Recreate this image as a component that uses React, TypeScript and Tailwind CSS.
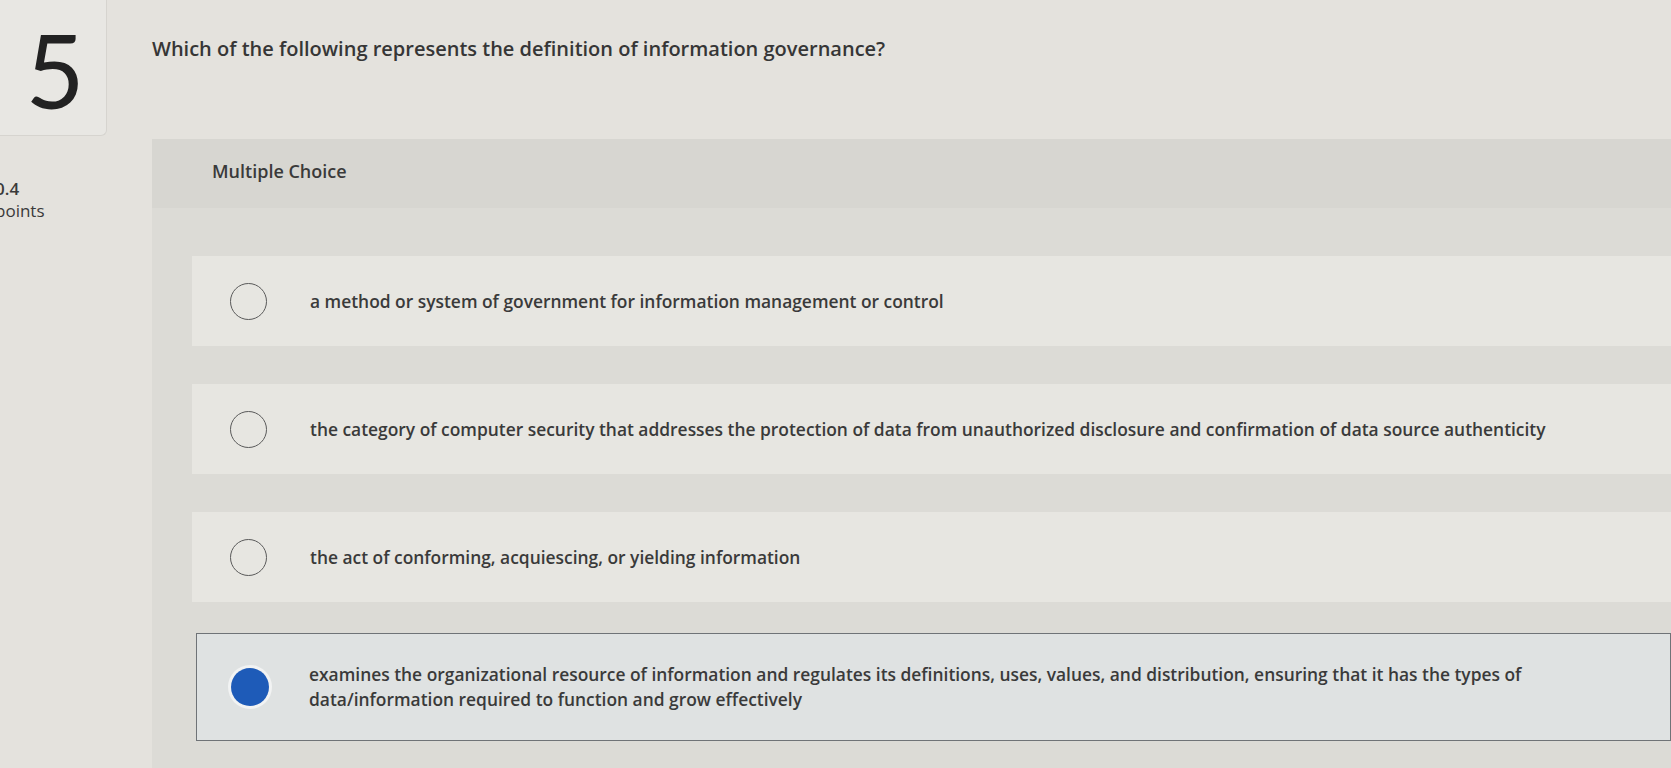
import React from 'react';

const options = [
  'a method or system of government for information management or control',
  'the category of computer security that addresses the protection of data from unauthorized disclosure and confirmation of data source authenticity',
  'the act of conforming, acquiescing, or yielding information',
  'examines the organizational resource of information and regulates its definitions, uses, values, and distribution, ensuring that it has the types of data/information required to function and grow effectively',
];

const selected = 3;

const App: React.FC = () => {
  return (
    <div
      className="min-h-[768px] w-full overflow-hidden bg-[#e4e2dd] flex text-[#353535]"
      style={{ fontFamily: '"Open Sans", Lato, sans-serif' }}
    >
      {/* left rail: question number + points */}
      <div className="w-[152px] shrink-0 flex flex-col">
        <div className="w-[111px] h-[136px] -ml-[4px] rounded-br-md border-r border-b border-[#d6d4cf] bg-[#e8e7e3] flex items-center justify-center">
          <span
            className="text-[102px] leading-none font-normal text-[#222] mt-[4px] ml-[8px]"
            style={{ fontFamily: 'Lato, sans-serif' }}
          >
            5
          </span>
        </div>
        <div className="-ml-[5px] mt-[42px] text-[17px] leading-[22px] text-[#3a3a3a]">
          <div className="font-semibold">0.4</div>
          <div>points</div>
        </div>
      </div>

      {/* question body */}
      <div className="flex-1 flex flex-col">
        <div className="h-[139px] pt-[35px]">
          <h1 className="text-[20px] leading-7 font-semibold text-[#363636]">
            Which of the following represents the definition of information governance?
          </h1>
        </div>

        <div className="flex flex-col bg-[#dbdad5]">
          <div className="h-[69px] pl-[60px] pt-[19px] bg-[#d7d6d1]">
            <span className="text-[18px] font-semibold text-[#3a3a3a]">Multiple Choice</span>
          </div>

          <div className="pl-[40px] pt-[48px] pb-[40px] flex flex-col gap-[38px] bg-[#dcdbd6]">
            {options.map((text, i) =>
              i === selected ? (
                <div
                  key={i}
                  className="-mt-[7px] ml-[4px] min-h-[108px] flex items-center border-[1.5px] border-[#6f7377] bg-[#dfe2e2] pl-[34px]"
                >
                  <span className="w-[38px] h-[38px] shrink-0 rounded-full bg-[#1e5bb8] ring-[3px] ring-[#f2f3f3]" />
                  <p className="ml-[40px] max-w-[1230px] text-[17.4px] leading-[25px] font-semibold text-[#3a3a3a]">{text}</p>
                </div>
              ) : (
                <div key={i} className="h-[90px] flex items-center bg-[#e7e6e1] pl-[38px]">
                  <span className="w-[37px] h-[37px] shrink-0 rounded-full border-[1.5px] border-[#5a5a5a]" />
                  <p className="ml-[43px] text-[17.4px] leading-[25px] font-semibold text-[#3a3a3a]">{text}</p>
                </div>
              )
            )}
          </div>
        </div>
      </div>
    </div>
  );
};

export default App;
